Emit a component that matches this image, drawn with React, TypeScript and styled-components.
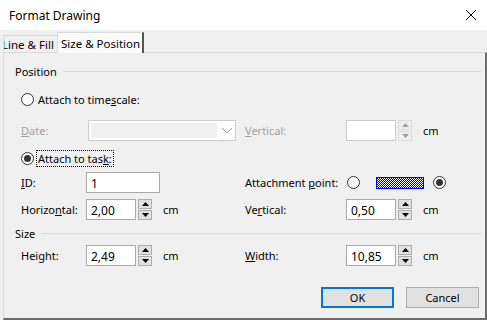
import React from "react";
import styled, { createGlobalStyle, css } from "styled-components";

const GlobalStyle = createGlobalStyle`
  html, body {
    margin: 0;
    padding: 0;
    background: #f0f0f0;
  }
  body {
    font-family: "Noto Sans", "Open Sans", sans-serif;
    font-size: 11px;
    color: #000;
  }
`;

const Window = styled.div`
  width: 487px;
  height: 320px;
  display: flex;
  flex-direction: column;
  background: #f0f0f0;
  overflow: hidden;
`;

const TitleBar = styled.div`
  height: 30px;
  flex: none;
  background: #fff;
  display: flex;
  align-items: center;
  justify-content: space-between;
  padding: 0 10px 0 9px;
`;

const Title = styled.span`
  font-size: 12px;
`;

const CloseButton = styled.button`
  border: none;
  background: none;
  padding: 0;
  width: 12px;
  height: 12px;
  display: flex;
`;

const TabStrip = styled.div`
  height: 22px;
  flex: none;
  display: flex;
  align-items: flex-end;
  padding-left: 3px;
`;

const Tab = styled.div<{ $active?: boolean }>`
  box-sizing: border-box;
  display: flex;
  align-items: center;
  white-space: nowrap;
  overflow: hidden;
  border: 1px solid #d9d9d9;
  border-bottom: none;
  font-size: 11.5px;
  ${(p) =>
    p.$active
      ? css`
          height: 21px;
          margin-bottom: -1px;
          background: #fbfbfb;
          padding: 0 2px 0 3px;
          border-right: 2px solid #555;
          position: relative;
          z-index: 1;
        `
      : css`
          height: 17px;
          width: 54px;
          background: #f0f0f0;
          padding-left: 1px;
          border-right: none;
        `}
`;

const ClippedText = styled.span`
  margin-left: -3px;
`;

const Panel = styled.div`
  flex: 1;
  margin-left: 3px;
  border-top: 1px solid #d9d9d9;
  border-left: 1px solid #d9d9d9;
  border-right: 2px solid #6b6b6b;
  border-bottom: 2px solid #6b6b6b;
  display: flex;
  flex-direction: column;
  padding: 10px 4px 0 11px;
`;

const GroupHeading = styled.div<{ $top: number }>`
  display: flex;
  align-items: center;
  gap: 6px;
  height: 16px;
  margin-top: ${(p) => p.$top}px;

  &::after {
    content: "";
    flex: 1;
    height: 1px;
    background: #dcdcdc;
  }
`;

const Row = styled.div<{ $height: number; $top?: number }>`
  display: flex;
  align-items: center;
  height: ${(p) => p.$height}px;
  margin-top: ${(p) => p.$top ?? 0}px;
  padding-left: 6px;
`;

const Half = styled.div<{ $width?: number }>`
  display: flex;
  align-items: center;
  width: ${(p) => (p.$width ? `${p.$width}px` : "auto")};
  flex: ${(p) => (p.$width ? "none" : "1")};
`;

const Label = styled.span<{ $width: number; $disabled?: boolean }>`
  width: ${(p) => p.$width}px;
  flex: none;
  white-space: nowrap;
  color: ${(p) => (p.$disabled ? "#a0a0a0" : "#000")};
`;

const TextBox = styled.div<{ $width: number; $disabled?: boolean }>`
  box-sizing: border-box;
  width: ${(p) => p.$width}px;
  height: 21px;
  border: 1px solid ${(p) => (p.$disabled ? "#cccccc" : "#a9a9a9")};
  background: #fff;
  display: flex;
  align-items: center;
  padding-left: 4px;
  padding-top: 1px;
  font-size: 12px;
`;

const Spin = styled.div`
  width: 14px;
  height: 21px;
  margin-left: 2px;
  display: flex;
  flex-direction: column;
  gap: 1px;
`;

const SpinHalf = styled.div<{ $disabled?: boolean }>`
  box-sizing: border-box;
  flex: 1;
  border: 1px solid ${(p) => (p.$disabled ? "#dcdcdc" : "#adadad")};
  background: ${(p) => (p.$disabled ? "#f0f0f0" : "#e1e1e1")};
  display: flex;
  align-items: center;
  justify-content: center;
`;

const Unit = styled.span`
  margin-left: 11px;
`;

const RadioCircle = styled.span<{ $checked?: boolean }>`
  box-sizing: border-box;
  width: 13px;
  height: 13px;
  border-radius: 50%;
  border: 1px solid #333;
  background: #fff;
  flex: none;
  display: flex;
  align-items: center;
  justify-content: center;

  &::after {
    content: "";
    width: 7px;
    height: 7px;
    border-radius: 50%;
    background: ${(p) => (p.$checked ? "#333" : "transparent")};
  }
`;

const RadioLabel = styled.span<{ $focused?: boolean }>`
  margin-left: 2px;
  padding: 0 1px;
  border: 1px dotted ${(p) => (p.$focused ? "#000" : "transparent")};
  line-height: 15px;
`;

const Combo = styled.div`
  box-sizing: border-box;
  width: 148px;
  height: 21px;
  border: 1px solid #cccccc;
  background: #fff;
  display: flex;
  align-items: center;
  padding: 2px;
  gap: 4px;
`;

const ComboFill = styled.div`
  flex: 1;
  height: 100%;
  background: #f0f0f0;
`;

const HatchBox = styled.svg`
  flex: none;
  margin: 0 9px 0 16px;
  shape-rendering: crispEdges;
`;

const ButtonBar = styled.div`
  display: flex;
  justify-content: flex-end;
  gap: 12px;
  margin-top: 21px;
  padding-right: 2px;
`;

const DialogButton = styled.button<{ $default?: boolean }>`
  box-sizing: border-box;
  width: 73px;
  height: 21px;
  font: inherit;
  color: #000;
  background: #e1e1e1;
  border: ${(p) => (p.$default ? "2px solid #0078d7" : "1px solid #adadad")};
  padding: 0;
`;

const U = styled.span`
  text-decoration: underline;
`;

function Arrow({ up, color }: { up?: boolean; color: string }) {
  return (
    <svg width="7" height="4" viewBox="0 0 7 4">
      <path d={up ? "M0 4 L3.5 0 L7 4 Z" : "M0 0 L3.5 4 L7 0 Z"} fill={color} />
    </svg>
  );
}

function Spinner({ disabled }: { disabled?: boolean }) {
  const color = disabled ? "#a0a0a0" : "#000";
  return (
    <Spin>
      <SpinHalf $disabled={disabled}>
        <Arrow up color={color} />
      </SpinHalf>
      <SpinHalf $disabled={disabled}>
        <Arrow color={color} />
      </SpinHalf>
    </Spin>
  );
}

function NumberField({ value, disabled }: { value: string; disabled?: boolean }) {
  return (
    <>
      <TextBox $width={50} $disabled={disabled}>
        {value}
      </TextBox>
      <Spinner disabled={disabled} />
      <Unit>cm</Unit>
    </>
  );
}

// blue dithered bar that stands for the drawing in the attachment picker
function Hatch() {
  return (
    <HatchBox width="48" height="12" viewBox="0 0 48 12">
      <defs>
        <pattern id="dither" width="2" height="2" patternUnits="userSpaceOnUse">
          <rect width="2" height="2" fill="#ffffff" />
          <rect width="1" height="1" fill="#0000ff" />
          <rect x="1" y="1" width="1" height="1" fill="#0000ff" />
        </pattern>
      </defs>
      <rect x="0" y="0" width="48" height="12" fill="url(#dither)" />
      <rect x="0.5" y="0.5" width="47" height="11" fill="none" stroke="#0000ff" />
    </HatchBox>
  );
}

export default function App() {
  return (
    <Window>
      <GlobalStyle />
      <TitleBar>
        <Title>Format Drawing</Title>
        <CloseButton aria-label="Close">
          <svg width="12" height="12" viewBox="0 0 12 12">
            <path d="M1 1 L11 11 M11 1 L1 11" stroke="#000" strokeWidth="1" />
          </svg>
        </CloseButton>
      </TitleBar>
      <TabStrip>
        <Tab>
          <ClippedText>Line &amp; Fill</ClippedText>
        </Tab>
        <Tab $active>Size &amp; Position</Tab>
      </TabStrip>
      <Panel>
        <GroupHeading $top={0}>Position</GroupHeading>
        <Row $height={16} $top={12}>
          <RadioCircle />
          <RadioLabel>
            Attach to time<U>s</U>cale:
          </RadioLabel>
        </Row>
        <Row $height={21} $top={13}>
          <Half $width={224}>
            <Label $width={67} $disabled>
              <U>D</U>ate:
            </Label>
            <Combo>
              <ComboFill />
              <svg width="12" height="7" viewBox="0 0 12 7">
                <path d="M1 1 L6 6 L11 1" stroke="#a0a0a0" fill="none" />
              </svg>
            </Combo>
          </Half>
          <Half>
            <Label $width={101} $disabled>
              <U>V</U>ertical:
            </Label>
            <NumberField value="" disabled />
          </Half>
        </Row>
        <Row $height={18} $top={8}>
          <RadioCircle $checked />
          <RadioLabel $focused>
            Attach to tas<U>k</U>:
          </RadioLabel>
        </Row>
        <Row $height={21} $top={5}>
          <Half $width={224}>
            <Label $width={65}>
              <U>I</U>D:
            </Label>
            <TextBox $width={74}>1</TextBox>
          </Half>
          <Half>
            <Label $width={102}>
              Attachment <U>p</U>oint:
            </Label>
            <RadioCircle />
            <Hatch />
            <RadioCircle $checked />
          </Half>
        </Row>
        <Row $height={21} $top={6}>
          <Half $width={224}>
            <Label $width={65}>
              Horizo<U>n</U>tal:
            </Label>
            <NumberField value="2,00" />
          </Half>
          <Half>
            <Label $width={101}>
              Ve<U>r</U>tical:
            </Label>
            <NumberField value="0,50" />
          </Half>
        </Row>
        <GroupHeading $top={5}>Size</GroupHeading>
        <Row $height={21} $top={4}>
          <Half $width={224}>
            <Label $width={65}>
              Hei<U>g</U>ht:
            </Label>
            <NumberField value="2,49" />
          </Half>
          <Half>
            <Label $width={101}>
              <U>W</U>idth:
            </Label>
            <NumberField value="10,85" />
          </Half>
        </Row>
        <ButtonBar>
          <DialogButton $default>OK</DialogButton>
          <DialogButton>Cancel</DialogButton>
        </ButtonBar>
      </Panel>
    </Window>
  );
}
